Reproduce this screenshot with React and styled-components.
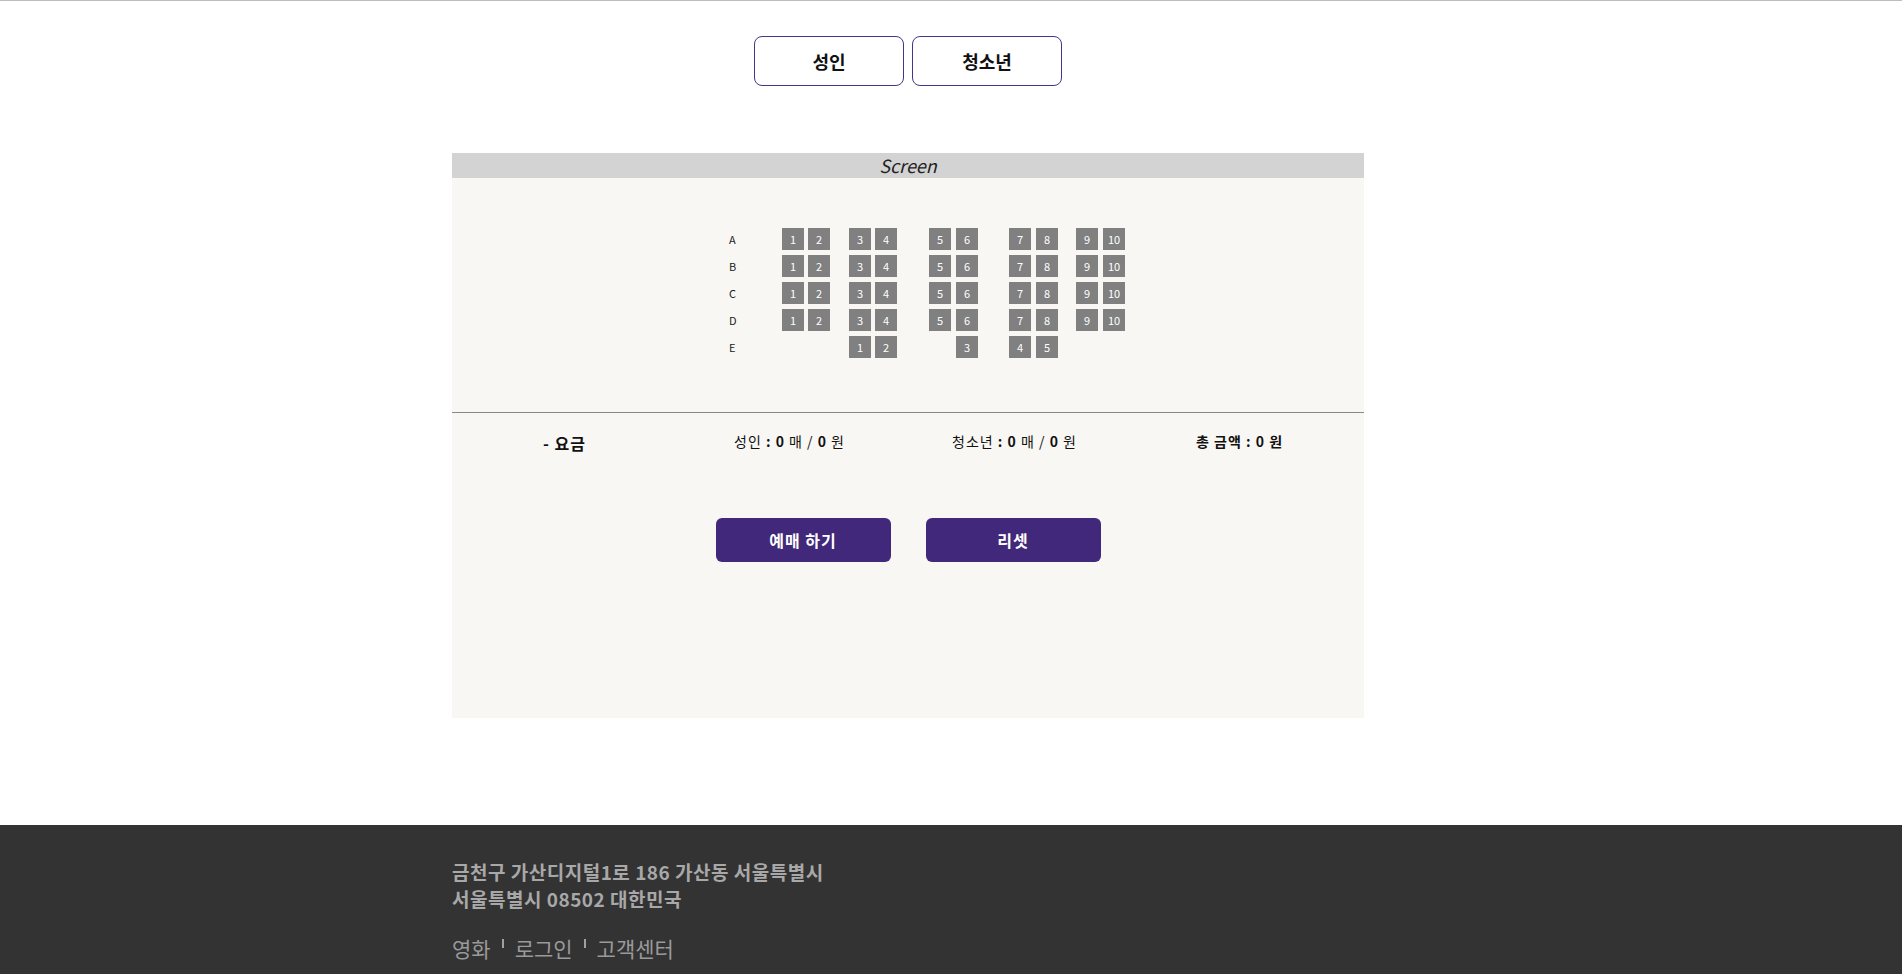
import React, { useState } from 'react';
import styled, { createGlobalStyle, css } from 'styled-components';

const GlobalStyle = createGlobalStyle`
  html, body {
    margin: 0;
    padding: 0;
    background: #fff;
    overflow: hidden;
  }
  body {
    font-family: "Noto Sans CJK KR", "Noto Sans", sans-serif;
    color: #111;
  }
  * {
    box-sizing: border-box;
  }
`;

const Page = styled.div`
  width: 100%;
  height: 974px;
  border-top: 1px solid #bdbdbd;
  display: flex;
  flex-direction: column;
`;
const Container = styled.div`
  width: 1000px;
  margin: 0 auto;
  padding-left: 1px;
`;
const Main = styled.main`
  flex: 1;
`;
const TypeBar = styled.div`
  width: 912px;
  display: flex;
  justify-content: center;
  gap: 8px;
  padding-top: 35px;
`;
const TypeButton = styled.button`
  width: 150px;
  height: 50px;
  border: 1px solid #45348a;
  border-radius: 8px;
  background: #fff;
  font-family: inherit;
  font-size: 18px;
  font-weight: 700;
  color: #111;
  padding: 0;
  cursor: pointer;
  ${props => props.active && css`
    background: #f3f0fa;
  `}
`;
const Panel = styled.section`
  width: 912px;
  height: 565px;
  margin-top: 67px;
  background: #f8f7f3;
  display: flex;
  flex-direction: column;
`;
const ScreenBar = styled.div`
  height: 25px;
  background: #d3d3d3;
  display: flex;
  align-items: center;
  justify-content: center;
  font-style: italic;
  font-size: 18px;
  color: #222;
  line-height: 25px;
`;
const SeatMap = styled.div`
  display: flex;
  flex-direction: column;
  gap: 5px;
  padding: 50px 0 54px 276px;
  border-bottom: 1px solid #888;
`;
const SeatRow = styled.div`
  display: flex;
  align-items: center;
  height: 22px;
`;
const RowLabel = styled.span`
  width: 54px;
  font-size: 11px;
  color: #222;
  padding-left: 1px;
`;
const Seat = styled.div`
  width: 22px;
  height: 22px;
  margin-left: ${props => props.gap}px;
  background: #808080;
  color: #fff;
  font-size: 11px;
  display: flex;
  align-items: center;
  justify-content: center;
  cursor: pointer;
  visibility: ${props => (props.empty ? 'hidden' : 'visible')};
  ${props => props.selected && css`
    background: #41287a;
  `}
`;
const PriceRow = styled.div`
  display: grid;
  grid-template-columns: repeat(4, 225px);
  padding-top: 18px;
  line-height: 20px;
`;
const PriceCell = styled.div`
  text-align: center;
  letter-spacing: 1px;
  font-weight: ${props => (props.bold ? 700 : 400)};
  font-size: ${props => (props.large ? '16px' : '14px')};
  margin-top: ${props => (props.large ? '2px' : '0')};
`;
const ActionBar = styled.div`
  display: flex;
  justify-content: center;
  gap: 35px;
  margin-top: 65px;
`;
const ActionButton = styled.button`
  width: 175px;
  height: 44px;
  border: none;
  border-radius: 6px;
  background: #41287a;
  color: #fff;
  font-family: inherit;
  font-size: 16px;
  font-weight: 700;
  letter-spacing: 1px;
  cursor: pointer;
`;
const Footer = styled.footer`
  height: 149px;
  background: #333;
  padding-top: 33px;
  overflow: hidden;
`;
const Address = styled.p`
  margin: 0;
  font-size: 19px;
  font-weight: 700;
  letter-spacing: 0.5px;
  line-height: 27px;
  color: #a8a8a8;
`;
const FooterNav = styled.nav`
  display: flex;
  align-items: flex-start;
  margin-top: 22px;
  font-size: 21px;
  line-height: 28px;
  color: #9a9a9a;
`;
const NavDivider = styled.span`
  width: 2px;
  height: 9px;
  margin: 5px 11px 0 11px;
  background: #a0a0a0;
`;

const COL_GAPS = [0, 4, 19, 4, 32, 5, 31, 5, 18, 5];
const ROWS = [
  { label: 'A', seats: [1, 2, 3, 4, 5, 6, 7, 8, 9, 10] },
  { label: 'B', seats: [1, 2, 3, 4, 5, 6, 7, 8, 9, 10] },
  { label: 'C', seats: [1, 2, 3, 4, 5, 6, 7, 8, 9, 10] },
  { label: 'D', seats: [1, 2, 3, 4, 5, 6, 7, 8, 9, 10] },
  { label: 'E', seats: [null, null, 1, 2, null, 3, 4, 5, null, null] },
];

export default function App() {
  const [selected, setSelected] = useState([]);

  const toggle = key => {
    setSelected(prev => (prev.includes(key) ? prev.filter(k => k !== key) : [...prev, key]));
  };

  return (
    <>
      <GlobalStyle />
      <Page>
        <Main>
          <Container>
            <TypeBar>
              <TypeButton>성인</TypeButton>
              <TypeButton>청소년</TypeButton>
            </TypeBar>
            <Panel>
              <ScreenBar>Screen</ScreenBar>
              <SeatMap>
                {ROWS.map(row => (
                  <SeatRow key={row.label}>
                    <RowLabel>{row.label}</RowLabel>
                    {row.seats.map((num, i) => {
                      const key = `${row.label}${num}`;
                      return (
                        <Seat
                          key={i}
                          gap={COL_GAPS[i]}
                          empty={num === null}
                          selected={selected.includes(key)}
                          onClick={() => num !== null && toggle(key)}
                        >
                          {num}
                        </Seat>
                      );
                    })}
                  </SeatRow>
                ))}
              </SeatMap>
              <PriceRow>
                <PriceCell bold large>- 요금</PriceCell>
                <PriceCell>
                  성인 <b>: 0</b> 매 / <b>0</b> 원
                </PriceCell>
                <PriceCell>
                  청소년 <b>: 0</b> 매 / <b>0</b> 원
                </PriceCell>
                <PriceCell bold>총 금액 : 0 원</PriceCell>
              </PriceRow>
              <ActionBar>
                <ActionButton>예매 하기</ActionButton>
                <ActionButton onClick={() => setSelected([])}>리셋</ActionButton>
              </ActionBar>
            </Panel>
          </Container>
        </Main>
        <Footer>
          <Container>
            <Address>금천구 가산디지털1로 186 가산동 서울특별시</Address>
            <Address>서울특별시 08502 대한민국</Address>
            <FooterNav>
              <span>영화</span>
              <NavDivider />
              <span>로그인</span>
              <NavDivider />
              <span>고객센터</span>
            </FooterNav>
          </Container>
        </Footer>
      </Page>
    </>
  );
}
